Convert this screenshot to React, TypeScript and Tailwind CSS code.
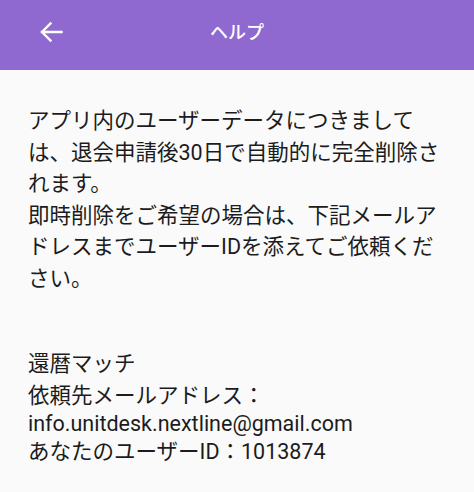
const font = "font-['Roboto','Noto_Sans_CJK_JP',sans-serif]";

function BackArrow() {
  return (
    <svg width="24" height="22" viewBox="0 0 24 22" fill="none" className="block">
      <path
        d="M22.5 11H3M11.5 2.5L3 11L11.5 19.5"
        stroke="white"
        strokeWidth="2.4"
        strokeLinecap="square"
      />
    </svg>
  );
}

export default function App() {
  return (
    <main className={`min-h-[492px] w-full bg-[#fafafa] text-[#1c1c1c] ${font}`}>
      <header className="flex h-[70px] items-center bg-[#8f69d0] pb-[6px]">
        <div className="flex w-[90px] pl-[39px]">
          <BackArrow />
        </div>
        <h1 className="flex-1 text-center text-[18px] font-medium text-white">ヘルプ</h1>
        <div className="w-[90px]" />
      </header>

      <section className="px-[28px] pt-[35px] text-[21.5px]">
        <p className="leading-[31.5px]">
          アプリ内のユーザーデータにつきましては、退会申請後30日で自動的に完全削除されます。
          <br />
          即時削除をご希望の場合は、下記メールアドレスまでユーザーIDを添えてご依頼ください。
        </p>

        <div className="mt-[54px]">
          <p className="leading-[32px]">還暦マッチ</p>
          <p className="leading-[32px]">依頼先メールアドレス：</p>
          <p className="leading-[24px]">info.unitdesk.nextline@gmail.com</p>
          <p className="leading-[32px]">あなたのユーザーID：1013874</p>
        </div>
      </section>
    </main>
  );
}
